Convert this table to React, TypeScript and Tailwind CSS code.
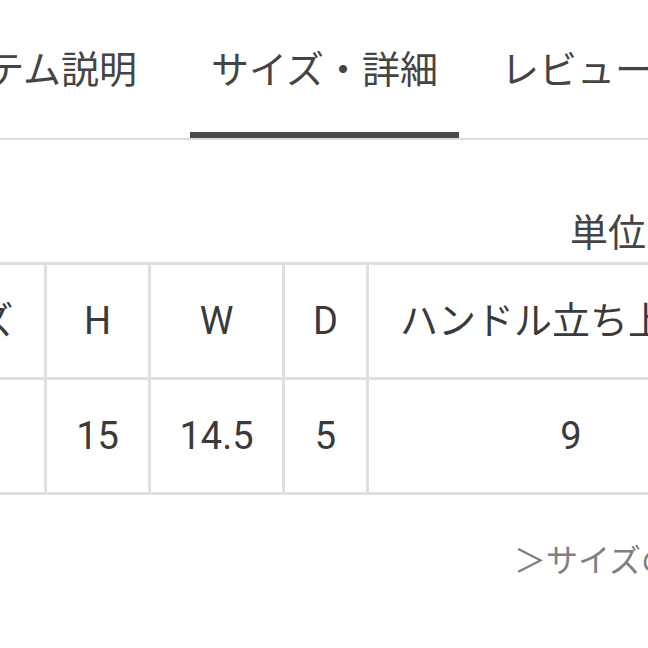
import React from "react";

const tabs = [
  { label: "アイテム説明", box: "w-[268px] justify-center", active: false },
  { label: "サイズ・詳細", box: "w-[269px] ml-[31px] justify-center", active: true },
  { label: "レビュー(3)", box: "w-[268px] ml-[22px] pl-[20px]", active: false },
];

const head = ["サイズ", "H", "W", "D", "ハンドル立ち上がり"];
const row = ["F", "15", "14.5", "5", "9"];

export default function App() {
  return (
    <div
      className="w-[648px] h-[648px] overflow-hidden bg-white text-[#444]"
      style={{ fontFamily: "Roboto, 'Noto Sans CJK JP', sans-serif" }}
    >
      <div className="w-[1100px] -ml-[140px]">
        {/* Tabs */}
        <div className="flex h-[140px] border-b-2 border-[#dcdcdc] pl-[31px]">
          {tabs.map((t) => (
            <div
              key={t.label}
              className={`${t.box} shrink-0 h-[138px] flex pt-[51px] text-[38px] leading-[38px] whitespace-nowrap ${
                t.active ? "border-b-[6px] border-[#4a4a4a]" : ""
              }`}
            >
              {t.label}
            </div>
          ))}
        </div>

        {/* Unit */}
        <div className="ml-[710px] pt-[74px] text-[38px] leading-[38px] text-[#444] whitespace-nowrap">
          単位：cm
        </div>

        {/* Size table */}
        <div className="mt-[10px] ml-[7px] inline-grid grid-cols-[174px_101px_131px_81px_404px] gap-[3px] p-[3px] bg-[#e0e0e0] text-[38px] leading-[38px] text-[#3a3a3a]">
          {head.map((h) => (
            <div key={h} className="h-[112px] bg-white flex items-center justify-center whitespace-nowrap">
              {h}
            </div>
          ))}
          {row.map((c, i) => (
            <div key={i} className="h-[112px] bg-white flex items-center justify-center whitespace-nowrap">
              {c}
            </div>
          ))}
        </div>

        {/* Link */}
        <div className="mt-[50px] ml-[654px] text-[32px] leading-[32px] text-[#808080] whitespace-nowrap">
          ＞サイズの測り方
        </div>
      </div>
    </div>
  );
}
